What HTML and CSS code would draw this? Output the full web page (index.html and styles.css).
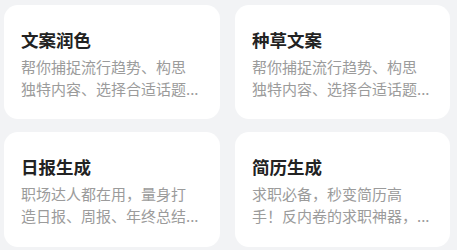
FILE: index.html
```html
<!DOCTYPE html>
<html lang="zh-CN">
<head>
<meta charset="utf-8">
<link rel="stylesheet" href="styles.css">
</head>
<body>
<div class="grid">
  <div class="card">
    <div class="title">文案润色</div>
    <div class="desc">帮你捕捉流行趋势、构思独特内容、选择合适话题...</div>
  </div>
  <div class="card">
    <div class="title">种草文案</div>
    <div class="desc">帮你捕捉流行趋势、构思独特内容、选择合适话题...</div>
  </div>
  <div class="card">
    <div class="title">日报生成</div>
    <div class="desc">职场达人都在用，量身打造日报、周报、年终总结...</div>
  </div>
  <div class="card">
    <div class="title">简历生成</div>
    <div class="desc">求职必备，秒变简历高手！反内卷的求职神器，...</div>
  </div>
</div>
</body>
</html>
```
FILE: styles.css
```css
html, body {
  margin: 0;
  padding: 0;
  background: #f2f3f5;
}
body {
  font-family: "Noto Sans CJK SC", "Noto Sans", sans-serif;
  width: 457px;
  height: 250px;
  overflow: hidden;
}
.grid {
  display: grid;
  grid-template-columns: 216px 215px;
  grid-template-rows: 114px 115px;
  column-gap: 15px;
  row-gap: 13px;
  padding: 5px 7px 3px 4px;
}
.card {
  background: #ffffff;
  border-radius: 14px;
  padding: 23px 20px 0 17px;
  box-sizing: border-box;
}
.title {
  font-size: 17.5px;
  line-height: 24px;
  font-weight: 700;
  color: #222222;
}
.desc {
  margin-top: 4px;
  font-size: 15px;
  line-height: 22px;
  color: #9b9b9b;
}
```
